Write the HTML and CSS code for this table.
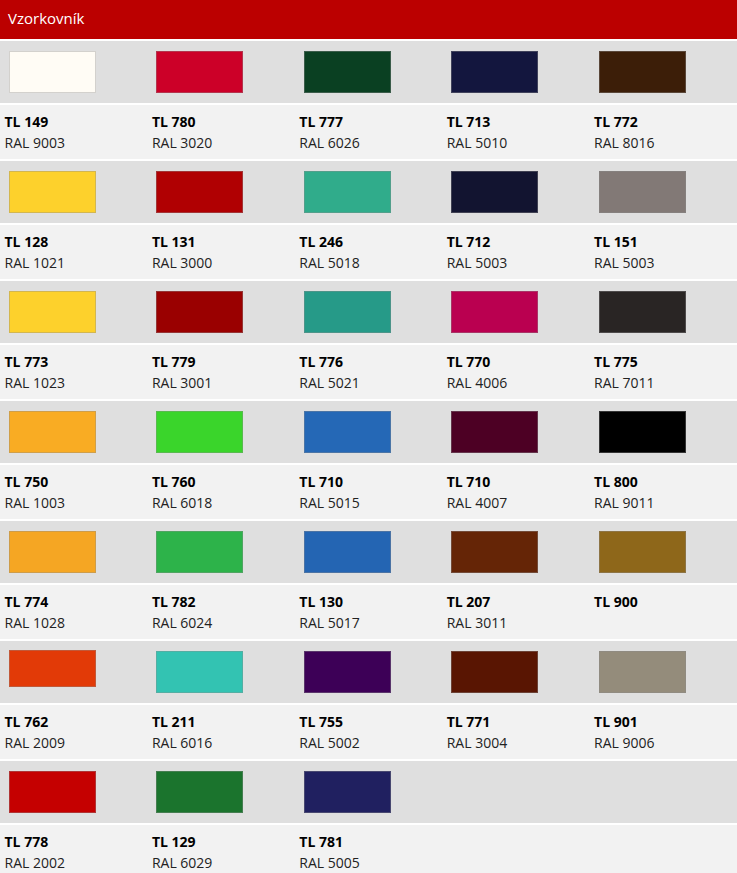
FILE: index.html
```html
<!DOCTYPE html>
<html lang="cs">
<head>
<meta charset="utf-8">
<title>Vzorkovník</title>
<link rel="stylesheet" href="styles.css">
</head>
<body>
<div class="header">Vzorkovník</div>

<div class="group">
  <div class="swatches">
    <div class="cell"><div class="swatch" style="background:#fffcf5"></div></div>
    <div class="cell"><div class="swatch" style="background:#cc0028"></div></div>
    <div class="cell"><div class="swatch" style="background:#0a4022"></div></div>
    <div class="cell"><div class="swatch" style="background:#13163e"></div></div>
    <div class="cell"><div class="swatch" style="background:#3c1e08"></div></div>
  </div>
  <div class="labels">
    <div class="label"><b>TL 149</b><span>RAL 9003</span></div>
    <div class="label"><b>TL 780</b><span>RAL 3020</span></div>
    <div class="label"><b>TL 777</b><span>RAL 6026</span></div>
    <div class="label"><b>TL 713</b><span>RAL 5010</span></div>
    <div class="label"><b>TL 772</b><span>RAL 8016</span></div>
  </div>
</div>

<div class="group">
  <div class="swatches">
    <div class="cell"><div class="swatch" style="background:#fdd12c"></div></div>
    <div class="cell"><div class="swatch" style="background:#b00002"></div></div>
    <div class="cell"><div class="swatch" style="background:#30ac8b"></div></div>
    <div class="cell"><div class="swatch" style="background:#121430"></div></div>
    <div class="cell"><div class="swatch" style="background:#827976"></div></div>
  </div>
  <div class="labels">
    <div class="label"><b>TL 128</b><span>RAL 1021</span></div>
    <div class="label"><b>TL 131</b><span>RAL 3000</span></div>
    <div class="label"><b>TL 246</b><span>RAL 5018</span></div>
    <div class="label"><b>TL 712</b><span>RAL 5003</span></div>
    <div class="label"><b>TL 151</b><span>RAL 5003</span></div>
  </div>
</div>

<div class="group">
  <div class="swatches">
    <div class="cell"><div class="swatch" style="background:#fdd12c"></div></div>
    <div class="cell"><div class="swatch" style="background:#9a0000"></div></div>
    <div class="cell"><div class="swatch" style="background:#269a88"></div></div>
    <div class="cell"><div class="swatch" style="background:#ba0050"></div></div>
    <div class="cell"><div class="swatch" style="background:#292524"></div></div>
  </div>
  <div class="labels">
    <div class="label"><b>TL 773</b><span>RAL 1023</span></div>
    <div class="label"><b>TL 779</b><span>RAL 3001</span></div>
    <div class="label"><b>TL 776</b><span>RAL 5021</span></div>
    <div class="label"><b>TL 770</b><span>RAL 4006</span></div>
    <div class="label"><b>TL 775</b><span>RAL 7011</span></div>
  </div>
</div>

<div class="group">
  <div class="swatches">
    <div class="cell"><div class="swatch" style="background:#f9ac23"></div></div>
    <div class="cell"><div class="swatch" style="background:#3ad52b"></div></div>
    <div class="cell"><div class="swatch" style="background:#2568b6"></div></div>
    <div class="cell"><div class="swatch" style="background:#4d0024"></div></div>
    <div class="cell"><div class="swatch" style="background:#000000"></div></div>
  </div>
  <div class="labels">
    <div class="label"><b>TL 750</b><span>RAL 1003</span></div>
    <div class="label"><b>TL 760</b><span>RAL 6018</span></div>
    <div class="label"><b>TL 710</b><span>RAL 5015</span></div>
    <div class="label"><b>TL 710</b><span>RAL 4007</span></div>
    <div class="label"><b>TL 800</b><span>RAL 9011</span></div>
  </div>
</div>

<div class="group">
  <div class="swatches">
    <div class="cell"><div class="swatch" style="background:#f5a623"></div></div>
    <div class="cell"><div class="swatch" style="background:#2db34a"></div></div>
    <div class="cell"><div class="swatch" style="background:#2465b3"></div></div>
    <div class="cell"><div class="swatch" style="background:#652506"></div></div>
    <div class="cell"><div class="swatch" style="background:#8e671a"></div></div>
  </div>
  <div class="labels">
    <div class="label"><b>TL 774</b><span>RAL 1028</span></div>
    <div class="label"><b>TL 782</b><span>RAL 6024</span></div>
    <div class="label"><b>TL 130</b><span>RAL 5017</span></div>
    <div class="label"><b>TL 207</b><span>RAL 3011</span></div>
    <div class="label"><b>TL 900</b></div>
  </div>
</div>

<div class="group">
  <div class="swatches">
    <div class="cell"><div class="swatch short" style="background:#e23a07"></div></div>
    <div class="cell"><div class="swatch" style="background:#33c3b2"></div></div>
    <div class="cell"><div class="swatch" style="background:#3d0057"></div></div>
    <div class="cell"><div class="swatch" style="background:#591502"></div></div>
    <div class="cell"><div class="swatch" style="background:#948c7b"></div></div>
  </div>
  <div class="labels">
    <div class="label"><b>TL 762</b><span>RAL 2009</span></div>
    <div class="label"><b>TL 211</b><span>RAL 6016</span></div>
    <div class="label"><b>TL 755</b><span>RAL 5002</span></div>
    <div class="label"><b>TL 771</b><span>RAL 3004</span></div>
    <div class="label"><b>TL 901</b><span>RAL 9006</span></div>
  </div>
</div>

<div class="group">
  <div class="swatches">
    <div class="cell"><div class="swatch" style="background:#c50000"></div></div>
    <div class="cell"><div class="swatch" style="background:#1b742d"></div></div>
    <div class="cell"><div class="swatch" style="background:#202060"></div></div>
    <div class="cell"></div>
    <div class="cell"></div>
  </div>
  <div class="labels">
    <div class="label"><b>TL 778</b><span>RAL 2002</span></div>
    <div class="label"><b>TL 129</b><span>RAL 6029</span></div>
    <div class="label"><b>TL 781</b><span>RAL 5005</span></div>
    <div class="label"></div>
    <div class="label"></div>
  </div>
</div>
</body>
</html>
```

FILE: styles.css
```css
html, body {
  margin: 0;
  padding: 0;
  background: #ffffff;
}
body {
  font-family: "Open Sans", "Liberation Sans", sans-serif;
  font-size: 14px;
  color: #222;
}
.header {
  height: 39px;
  line-height: 37px;
  padding: 0 8px;
  background: #bb0000;
  color: #fff;
  font-size: 15px;
  box-sizing: border-box;
}
.group {
  display: flex;
  flex-direction: column;
}
.swatches,
.labels {
  display: grid;
  grid-template-columns: repeat(5, 1fr);
  margin-top: 2px;
}
.swatches {
  background: #dfdfdf;
  height: 62px;
}
.labels {
  background: #f2f2f2;
  height: 54px;
}
.cell {
  padding: 10px 0 0 9px;
}
.swatch {
  width: 87px;
  height: 42px;
  box-sizing: border-box;
  border: 1px solid rgba(140, 140, 140, 0.38);
}
.swatch.short {
  height: 37px;
  margin-top: -1px;
}
.label {
  display: flex;
  flex-direction: column;
  padding: 6px 4.5px 0;
  line-height: 21px;
}
.label b {
  font-weight: 700;
  color: #000;
}
.label span {
  color: #222;
}
```
